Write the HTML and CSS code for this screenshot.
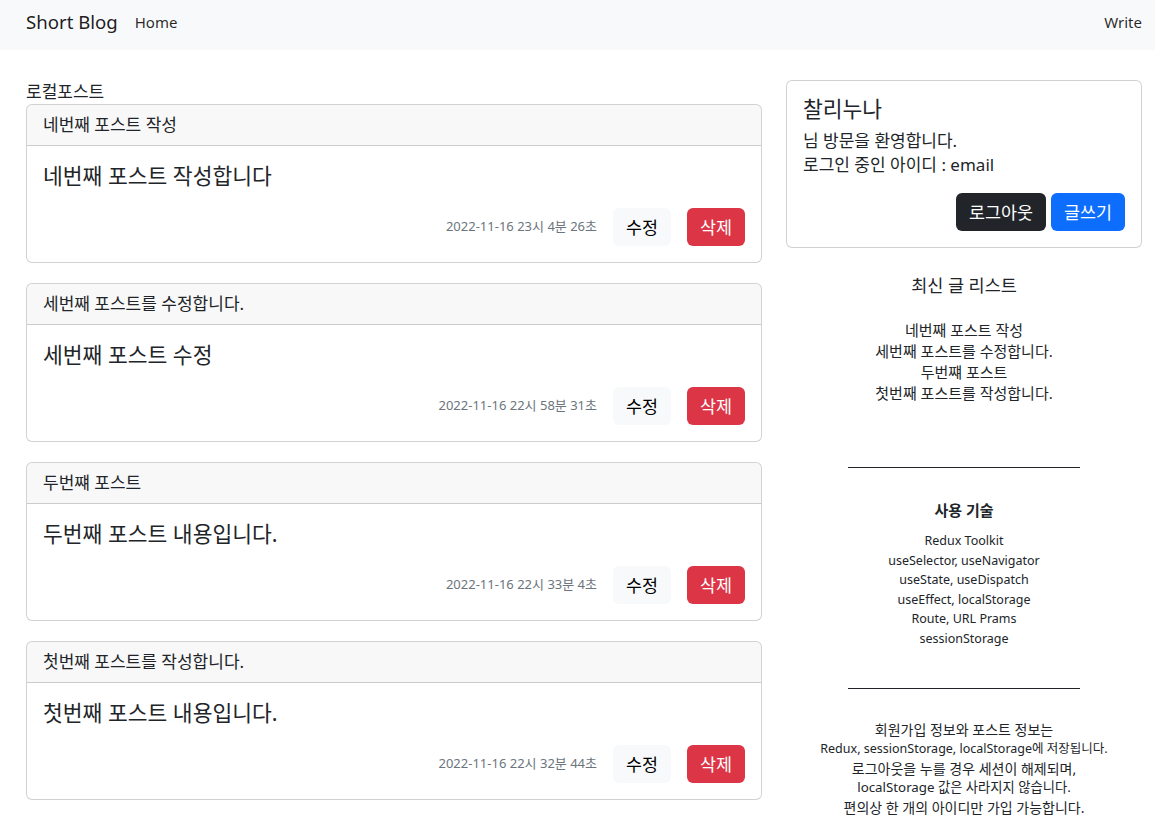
FILE: index.html
```html
<!DOCTYPE html>
<html lang="ko">
<head>
  <meta charset="UTF-8">
  <title>Short Blog</title>
  <meta name="viewport" content="width=device-width, initial-scale=1.0">
  <link rel="stylesheet" href="styles.css">
</head>
<body>
  <nav class="navbar">
    <a class="brand" href="#">Short Blog</a>
    <a class="nav-link" href="#">Home</a>
    <a class="nav-link write" href="#">Write</a>
  </nav>

  <div class="main">
    <!-- post list -->
    <div class="posts">
      <div class="posts-title">로컬포스트</div>

      <div class="card">
        <div class="card-header">네번째 포스트 작성</div>
        <div class="card-body">
          <div class="post-text">네번째 포스트 작성합니다</div>
          <div class="post-foot">
            <span class="date">2022-11-16 23시 4분 26초</span>
            <button class="btn btn-light">수정</button>
            <button class="btn btn-danger">삭제</button>
          </div>
        </div>
      </div>

      <div class="card">
        <div class="card-header">세번째 포스트를 수정합니다.</div>
        <div class="card-body">
          <div class="post-text">세번째 포스트 수정</div>
          <div class="post-foot">
            <span class="date">2022-11-16 22시 58분 31초</span>
            <button class="btn btn-light">수정</button>
            <button class="btn btn-danger">삭제</button>
          </div>
        </div>
      </div>

      <div class="card">
        <div class="card-header">두번쨰 포스트</div>
        <div class="card-body">
          <div class="post-text">두번째 포스트 내용입니다.</div>
          <div class="post-foot">
            <span class="date">2022-11-16 22시 33분 4초</span>
            <button class="btn btn-light">수정</button>
            <button class="btn btn-danger">삭제</button>
          </div>
        </div>
      </div>

      <div class="card">
        <div class="card-header">첫번째 포스트를 작성합니다.</div>
        <div class="card-body">
          <div class="post-text">첫번째 포스트 내용입니다.</div>
          <div class="post-foot">
            <span class="date">2022-11-16 22시 32분 44초</span>
            <button class="btn btn-light">수정</button>
            <button class="btn btn-danger">삭제</button>
          </div>
        </div>
      </div>
    </div>

    <!-- sidebar -->
    <div class="sidebar">
      <div class="card user-card">
        <div class="user-name">찰리누나</div>
        <p>님 방문을 환영합니다.</p>
        <p>로그인 중인 아이디 : email</p>
        <div class="user-btns">
          <button class="btn btn-dark">로그아웃</button>
          <button class="btn btn-primary">글쓰기</button>
        </div>
      </div>

      <div class="side-title">최신 글 리스트</div>
      <ul class="recent">
        <li>네번째 포스트 작성</li>
        <li>세번째 포스트를 수정합니다.</li>
        <li>두번쨰 포스트</li>
        <li>첫번째 포스트를 작성합니다.</li>
      </ul>

      <div class="divider"></div>

      <div class="tech-title">사용 기술</div>
      <ul class="tech">
        <li>Redux Toolkit</li>
        <li>useSelector, useNavigator</li>
        <li>useState, useDispatch</li>
        <li>useEffect, localStorage</li>
        <li>Route, URL Prams</li>
        <li>sessionStorage</li>
      </ul>

      <div class="divider"></div>

      <div class="notice">
        <p class="ko">회원가입 정보와 포스트 정보는</p>
        <p>Redux, sessionStorage, localStorage에 저장됩니다.</p>
        <p class="ko">로그아웃을 누를 경우 세션이 해제되며,</p>
        <p class="mix">localStorage 값은 사라지지 않습니다.</p>
        <p class="ko">편의상 한 개의 아이디만 가입 가능합니다.</p>
      </div>
    </div>
  </div>
</body>
</html>
```

FILE: styles.css
```css
* { box-sizing: border-box; }

body {
  margin: 0;
  font-family: "Noto Sans", "Noto Sans CJK KR", sans-serif;
  font-size: 16px;
  line-height: 1.5;
  color: #212529;
  background: #fff;
}

a { text-decoration: none; color: inherit; }

/* navbar */
.navbar {
  display: flex;
  align-items: center;
  height: 50px;
  padding: 0 13px 6px 26px;
  background: #f8f9fa;
}

.brand {
  font-size: 18.6px;
  margin-right: 17px;
  color: rgba(0,0,0,0.9);
}

.nav-link {
  font-size: 15px;
  color: rgba(0,0,0,0.85);
}

.nav-link.write {
  margin-left: auto;
}

/* layout */
.main {
  display: flex;
  gap: 24px;
  padding: 30px 13px 0 26px;
}

.posts {
  flex: 1;
}

.sidebar {
  width: 356px;
  text-align: center;
}

.posts-title {
  line-height: 24px;
  font-size: 17px;
}

/* cards */
.card {
  border: 1px solid rgba(0,0,0,0.175);
  border-radius: 6px;
  background: #fff;
  margin-bottom: 20px;
  text-align: left;
}

.card-header {
  height: 41px;
  padding: 8px 16px;
  font-size: 17px;
  line-height: 24px;
  background: rgba(33,37,41,0.03);
  border-bottom: 1px solid rgba(0,0,0,0.175);
  border-radius: 5px 5px 0 0;
}

.card-body {
  padding: 16px;
}

.post-text {
  font-size: 21.5px;
  line-height: 28px;
  margin-bottom: 18px;
}

.post-foot {
  display: flex;
  justify-content: flex-end;
  align-items: center;
  gap: 16px;
}

.date {
  font-size: 13px;
  color: #6c757d;
}

/* buttons */
.btn {
  font-family: inherit;
  font-size: 17.4px;
  line-height: 24px;
  padding: 6px 12px;
  border: 1px solid transparent;
  border-radius: 6px;
  cursor: pointer;
}

.btn-light { background: #f8f9fa; color: #000; }
.btn-danger { background: #dc3545; color: #fff; }
.btn-dark { background: #212529; color: #fff; }
.btn-primary { background: #0d6efd; color: #fff; }

/* user card */
.user-card {
  padding: 16px;
  margin-bottom: 25px;
}

.user-name {
  font-size: 21.5px;
  line-height: 24px;
  margin-bottom: 8px;
}

.user-card p {
  margin: 0;
  font-size: 17px;
  line-height: 24px;
}

.user-btns {
  display: flex;
  justify-content: flex-end;
  gap: 5px;
  margin-top: 16px;
}

/* sidebar lists */
.side-title {
  font-size: 17.5px;
  line-height: 24px;
}

.recent, .tech {
  list-style: none;
  margin: 0;
  padding: 0;
}

.recent {
  margin-top: 23px;
  font-size: 15px;
  line-height: 21px;
}

.divider {
  width: 232px;
  margin: 63px auto 0;
  border-top: 1px solid #212529;
}

.tech-title {
  margin-top: 32px;
  font-size: 15px;
  font-weight: bold;
  line-height: 21px;
}

.tech {
  margin-top: 10px;
  font-size: 12.5px;
  line-height: 19.6px;
}

.tech + .divider {
  margin-top: 39px;
}

.notice {
  margin-top: 31px;
  font-size: 12.5px;
  line-height: 19.6px;
}

.notice p {
  margin: 0;
}

.notice .ko {
  font-size: 14px;
}

.notice .mix {
  font-size: 13.3px;
}
```
